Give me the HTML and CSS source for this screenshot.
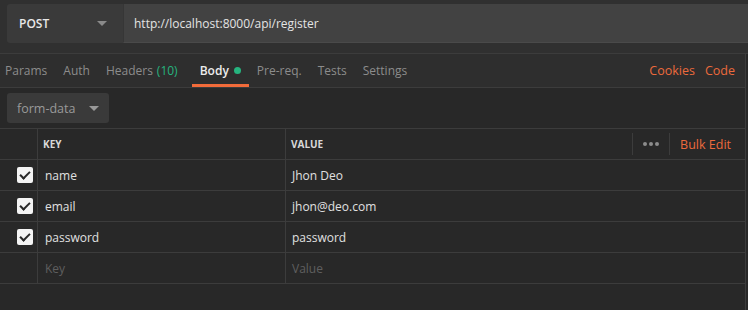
FILE: index.html
```html
<!DOCTYPE html>
<html lang="en">
<head>
  <meta charset="UTF-8">
  <title>Postman - Register</title>
  <link rel="stylesheet" href="styles.css">
</head>
<body>
  <div class="app">
    <div class="request-bar">
      <div class="request">
        <div class="method">POST <span class="caret"></span></div>
        <div class="url">http://localhost:8000/api/register</div>
      </div>
    </div>

    <div class="tabs">
      <div class="tab-list">
        <span class="tab">Params</span>
        <span class="tab">Auth</span>
        <span class="tab">Headers <span class="count">(10)</span></span>
        <span class="tab active">Body <span class="dot"></span></span>
        <span class="tab">Pre-req.</span>
        <span class="tab">Tests</span>
        <span class="tab">Settings</span>
      </div>
      <div class="tab-links">
        <span class="link">Cookies</span>
        <span class="link">Code</span>
      </div>
    </div>

    <div class="body-type">
      <div class="select">form-data <span class="caret"></span></div>
    </div>

    <div class="table">
      <div class="row head">
        <div class="cell check"></div>
        <div class="cell key">KEY</div>
        <div class="cell value">
          VALUE
          <div class="actions">
            <span class="more"><i></i><i></i><i></i></span>
            <span class="link">Bulk Edit</span>
          </div>
        </div>
      </div>
      <div class="row">
        <div class="cell check"><span class="box"></span></div>
        <div class="cell key">name</div>
        <div class="cell value">Jhon Deo</div>
      </div>
      <div class="row">
        <div class="cell check"><span class="box"></span></div>
        <div class="cell key">email</div>
        <div class="cell value">jhon@deo.com</div>
      </div>
      <div class="row">
        <div class="cell check"><span class="box"></span></div>
        <div class="cell key">password</div>
        <div class="cell value">password</div>
      </div>
      <div class="row empty">
        <div class="cell check"></div>
        <div class="cell key">Key</div>
        <div class="cell value">Value</div>
      </div>
    </div>
  </div>
</body>
</html>
```

FILE: styles.css
```css
body {
  margin: 0;
  background-color: #282828;
  font-family: "Open Sans", "Noto Sans", sans-serif;
  font-size: 12px;
  color: #e0e0e0;
}

.app {
  width: 748px;
  height: 310px;
  overflow: hidden;
  background-color: #282828;
}

.request-bar {
  height: 54px;
  box-sizing: border-box;
  padding: 4px 0 0 7px;
  background-color: #303030;
  border-bottom: 1px solid #3c3c3c;
}

.request {
  display: flex;
  height: 39px;
}

.method {
  width: 116px;
  box-sizing: border-box;
  display: flex;
  align-items: center;
  justify-content: space-between;
  padding: 0 16px 0 12px;
  background-color: #3a3a3a;
  border-radius: 3px 0 0 3px;
  font-weight: 600;
  color: #e8e8e8;
}

.method .caret,
.select .caret {
  width: 0;
  height: 0;
  border-left: 5px solid transparent;
  border-right: 5px solid transparent;
  border-top: 5px solid #8a8a8a;
}

.url {
  flex: 1;
  display: flex;
  align-items: center;
  padding-left: 10px;
  background-color: #424242;
  border-left: 1px solid #363636;
  border-bottom: 1px solid #4a4a4a;
  color: #e4e4e4;
}

.tabs {
  height: 33px;
  display: flex;
  justify-content: space-between;
  align-items: stretch;
  background-color: #2e2e2e;
  border-bottom: 1px solid #3c3c3c;
  border-right: 1px solid #3c3c3c;
  margin-right: 2px;
}

.tab-list {
  display: flex;
  padding-left: 5px;
}

.tab {
  display: flex;
  align-items: center;
  margin-right: 16px;
  color: #8c8c8c;
  font-size: 12px;
}

.tab .count {
  color: #26b47f;
  margin-left: 4px;
}

.tab.active {
  color: #ececec;
  font-weight: 600;
  padding: 0 8px;
  margin: 0 8px 0 -2px;
  box-shadow: inset 0 -3px 0 #f26b3a;
}

.tab .dot {
  width: 7px;
  height: 7px;
  border-radius: 50%;
  background-color: #26b47f;
  margin-left: 5px;
}

.tab-links {
  display: flex;
  align-items: center;
  gap: 10px;
  padding-right: 10px;
}

.link {
  color: #ec6a3c;
  font-size: 12.5px;
}

.body-type {
  height: 41px;
  box-sizing: border-box;
  padding: 5px 7px;
  border-bottom: 1px solid #3c3c3c;
  border-right: 1px solid #3c3c3c;
  margin-right: 2px;
}

.select {
  width: 102px;
  height: 30px;
  box-sizing: border-box;
  display: flex;
  align-items: center;
  gap: 14px;
  padding-left: 10px;
  background-color: #3a3a3a;
  border-radius: 3px;
  color: #999;
  font-size: 12.5px;
}

.select .caret {
  border-top-color: #999;
}

.table {
  margin-right: 2px;
  border-right: 1px solid #3c3c3c;
  height: 200px;
}

.row {
  display: flex;
  height: 31px;
  border-bottom: 1px solid #3c3c3c;
  box-sizing: border-box;
}

.cell {
  display: flex;
  align-items: center;
  box-sizing: border-box;
}

.check {
  width: 38px;
  justify-content: flex-end;
  padding-right: 4px;
  border-right: 1px solid #3c3c3c;
}

.key {
  width: 248px;
  padding-left: 7px;
  border-right: 1px solid #3c3c3c;
}

.value {
  flex: 1;
  padding-left: 6px;
}

.head .key,
.head .value {
  font-size: 10px;
  font-weight: 700;
  color: #d8d8d8;
  padding-left: 5px;
}

.head .value {
  justify-content: space-between;
}

.actions {
  display: flex;
  align-items: center;
  height: 22px;
  padding-right: 14px;
}

.more {
  display: flex;
  gap: 2px;
  height: 22px;
  align-items: center;
  padding: 0 10px;
  border-left: 1px solid #3c3c3c;
  border-right: 1px solid #3c3c3c;
  margin-right: 10px;
}

.more i {
  width: 4px;
  height: 4px;
  border-radius: 50%;
  background-color: #8c8c8c;
}

.actions .link {
  font-size: 12.5px;
  font-weight: 400;
}

.box {
  width: 16px;
  height: 16px;
  border-radius: 2px;
  background-color: #f4f4f4;
  position: relative;
}

.box::after {
  content: "";
  position: absolute;
  left: 5px;
  top: 2px;
  width: 4px;
  height: 8px;
  border-right: 2px solid #282828;
  border-bottom: 2px solid #282828;
  transform: rotate(45deg);
}

.row.empty .cell {
  color: #5f5f5f;
}
```
